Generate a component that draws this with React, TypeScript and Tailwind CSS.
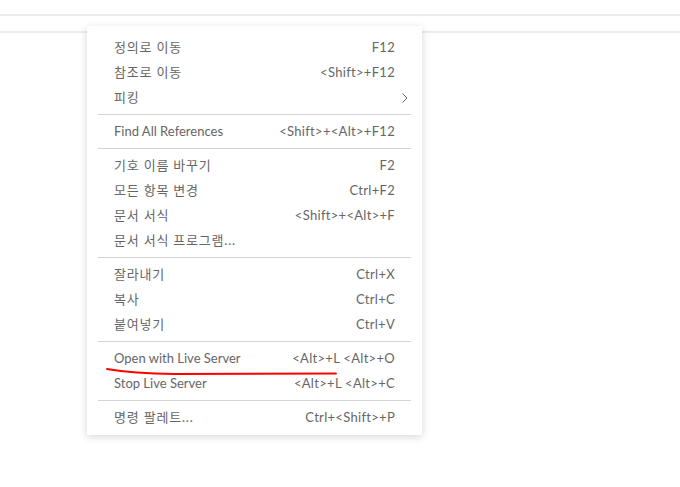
import React from 'react';

type Item = { label: string; key?: string; sub?: boolean } | 'sep';

const items: Item[] = [
  { label: '정의로 이동', key: 'F12' },
  { label: '참조로 이동', key: '<Shift>+F12' },
  { label: '피킹', sub: true },
  'sep',
  { label: 'Find All References', key: '<Shift>+<Alt>+F12' },
  'sep',
  { label: '기호 이름 바꾸기', key: 'F2' },
  { label: '모든 항목 변경', key: 'Ctrl+F2' },
  { label: '문서 서식', key: '<Shift>+<Alt>+F' },
  { label: '문서 서식 프로그램...' },
  'sep',
  { label: '잘라내기', key: 'Ctrl+X' },
  { label: '복사', key: 'Ctrl+C' },
  { label: '붙여넣기', key: 'Ctrl+V' },
  'sep',
  { label: 'Open with Live Server', key: '<Alt>+L <Alt>+O' },
  { label: 'Stop Live Server', key: '<Alt>+L <Alt>+C' },
  'sep',
  { label: '명령 팔레트...', key: 'Ctrl+<Shift>+P' },
];

const isKorean = (s: string) => /[가-힣]/.test(s);

const App: React.FC = () => {
  return (
    <div
      className="relative w-[680px] h-[487px] bg-white overflow-hidden"
      style={{ fontFamily: 'Lato, "Noto Sans CJK KR", sans-serif' }}
    >
      {/* Background editor lines */}
      <div className="h-[14px]" />
      <div className="h-[2px] bg-[#ececec]" />
      <div className="h-[15px]" />
      <div className="h-[2px] bg-[#ececec]" />

      {/* Context menu */}
      <div className="absolute left-[87px] top-[26px] w-[335px] bg-white pt-[9px] pb-[5px] shadow-[0_2px_8px_rgba(0,0,0,0.16)]">
        {items.map((it, i) =>
          it === 'sep' ? (
            <div key={i} className="py-[4px] px-[11px]">
              <div className="h-px bg-[#d4d4d4]" />
            </div>
          ) : (
            <div key={i} className="h-[25px] flex items-center justify-between pl-[27px] pr-[27px] text-[13px] text-[#666666]">
              <span className={isKorean(it.label) ? 'tracking-[0.8px]' : ''}>{it.label}</span>
              {it.key && <span className="tracking-[0.3px]">{it.key}</span>}
              {it.sub && (
                <svg width="8" height="12" viewBox="0 0 8 12" className="mr-[-14px]">
                  <path d="M1.5 1.5 L6 6 L1.5 10.5" fill="none" stroke="#666666" strokeWidth="1" />
                </svg>
              )}
            </div>
          )
        )}
      </div>

      {/* Red hand-drawn underline */}
      <svg className="absolute left-0 top-0 pointer-events-none" width="680" height="487">
        <path
          d="M107 369 C 125 372, 145 373.5, 175 374 L 336 373.5"
          fill="none"
          stroke="#ff0000"
          strokeWidth="1.8"
          strokeLinecap="round"
        />
      </svg>
    </div>
  );
};

export default App;
